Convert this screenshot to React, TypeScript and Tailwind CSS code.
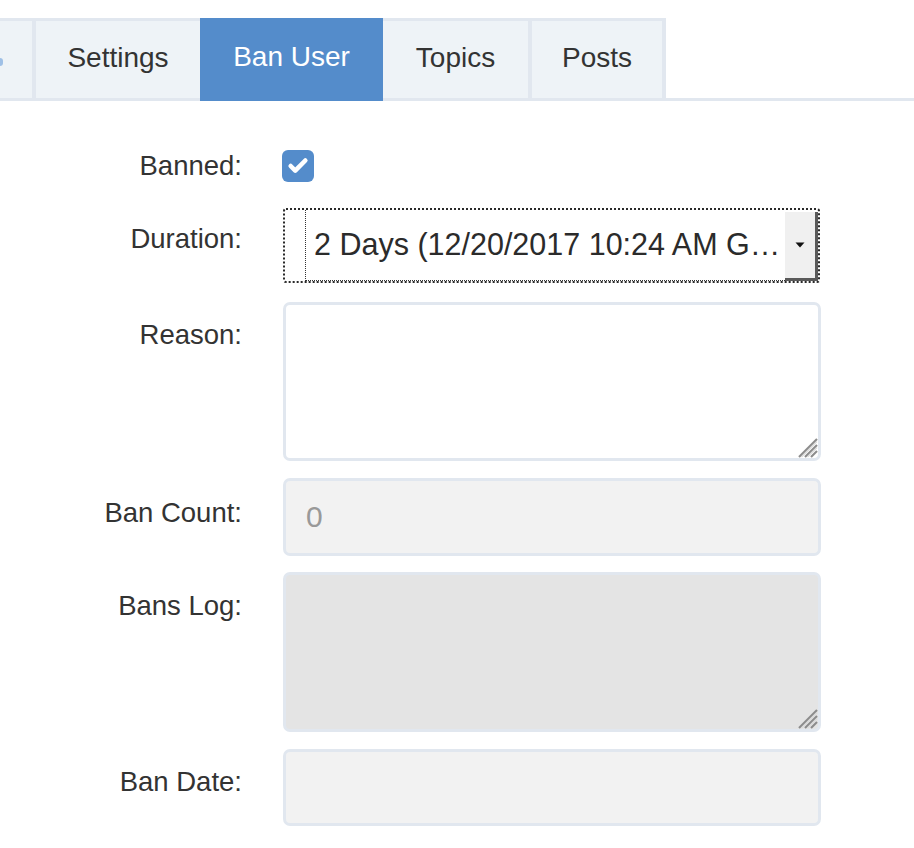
import { Check } from 'lucide-react';

const tabs = [
  { label: 'Settings', w: 'w-[164px]' },
  { label: 'Ban User', w: 'w-[183px]', active: true },
  { label: 'Topics', w: 'w-[145px]' },
  { label: 'Posts', w: 'w-[130px]' },
];

function ResizeGrip() {
  return (
    <svg width="22" height="22" viewBox="0 0 22 22" className="block">
      <line x1="21" y1="3" x2="3" y2="21" stroke="#8c8c8c" strokeWidth="2.2" />
      <line x1="21" y1="9" x2="9" y2="21" stroke="#8c8c8c" strokeWidth="2.2" />
      <line x1="21" y1="15" x2="15" y2="21" stroke="#8c8c8c" strokeWidth="2.2" />
      <line x1="21" y1="5.5" x2="5.5" y2="21" stroke="#d8d8d8" strokeWidth="1.2" />
      <line x1="21" y1="11.5" x2="11.5" y2="21" stroke="#d8d8d8" strokeWidth="1.2" />
    </svg>
  );
}

function Label({ children, top = 'pt-[15px]' }: { children: string; top?: string }) {
  return (
    <div className={`${top} text-right text-[27.5px] leading-[34px] text-[#333]`}>{children}</div>
  );
}

export default function App() {
  return (
    <div className="min-h-screen bg-white font-['Liberation_Sans',Arial,sans-serif] text-[#333] overflow-hidden">
      {/* Tabs */}
      <div className="mt-[18px] flex items-start border-b-[3px] border-[#e1e7ef]">
        <div className="w-[32px] h-[80px] border-t-[3px] border-[#e1e7ef] bg-[#eef3f7] flex items-center">
          <div className="w-[3px] h-[8px] mt-[4px] rounded-r-full bg-[#9fc0e6]" />
        </div>
        <div className="w-[4px] h-[80px] bg-[#e1e7ef]" />
        {tabs.map(t =>
          t.active ? (
            <div
              key={t.label}
              className={`${t.w} h-[83px] -mb-[3px] bg-[#548ccb] text-white text-[28px] flex items-center justify-center pb-[5px]`}
            >
              {t.label}
            </div>
          ) : (
            <div key={t.label} className="flex">
              <div
                className={`${t.w} h-[80px] border-t-[3px] border-[#e1e7ef] bg-[#eef3f7] text-[28px] flex items-center justify-center pb-[3px]`}
              >
                {t.label}
              </div>
              {t.label !== 'Settings' && <div className="w-[4px] h-[80px] bg-[#e1e7ef]" />}
            </div>
          )
        )}
      </div>

      {/* Form */}
      <div className="pt-[49px] grid grid-cols-[242px_538px] gap-x-[41px]">
        {/* Banned */}
        <div className="text-right text-[27.5px] leading-[32px]">Banned:</div>
        <div className="h-[58px]">
          <div className="w-[32px] h-[32px] -ml-[1px] rounded-[6px] bg-[#548ccb] flex items-center justify-center">
            <Check size={22} strokeWidth={5} color="#ffffff" />
          </div>
        </div>

        {/* Duration */}
        <Label top="pt-[14px]">Duration:</Label>
        <div className="w-[537px] h-[75px] border-2 border-dotted border-[#2a2a2a] rounded-[3px] flex">
          <div className="w-[21px] border-r border-dotted border-[#333]" />
          <div className="flex-1 min-w-0 border-b border-dotted border-[#333] flex items-center pl-[8px]">
            <span className="text-[30.5px] text-[#2b2b2b] whitespace-nowrap">
              2 Days (12/20/2017 10:24 AM G…
            </span>
          </div>
          <div className="w-[33px] mt-[2px] bg-[#f0f0f0] border-r-[3px] border-b-[3px] border-[#5a5a5a] flex items-center justify-center">
            <svg width="10" height="6" viewBox="0 0 10 6">
              <path d="M0.5 0.5 L9.5 0.5 L5 5.5 Z" fill="#111" />
            </svg>
          </div>
        </div>

        {/* Reason */}
        <Label top="pt-[35px]">Reason:</Label>
        <div className="mt-[19px] h-[159px] border-[3px] border-[#e1e7ef] rounded-[7px] bg-white flex items-end justify-end">
          <ResizeGrip />
        </div>

        {/* Ban Count */}
        <Label top="pt-[35px]">Ban Count:</Label>
        <div className="mt-[17px] h-[78px] border-[3px] border-[#e1e7ef] rounded-[7px] bg-[#f2f2f2] flex items-center pl-[20px] pb-[2px]">
          <span className="text-[30px] text-[#999]">0</span>
        </div>

        {/* Bans Log */}
        <Label top="pt-[33px]">Bans Log:</Label>
        <div className="mt-[16px] h-[160px] border-[3px] border-[#e1e7ef] rounded-[7px] bg-[#e4e4e4] flex items-end justify-end">
          <ResizeGrip />
        </div>

        {/* Ban Date */}
        <Label top="pt-[33px]">Ban Date:</Label>
        <div className="mt-[17px] h-[77px] border-[3px] border-[#e1e7ef] rounded-[7px] bg-[#f2f2f2]" />
      </div>
    </div>
  );
}
